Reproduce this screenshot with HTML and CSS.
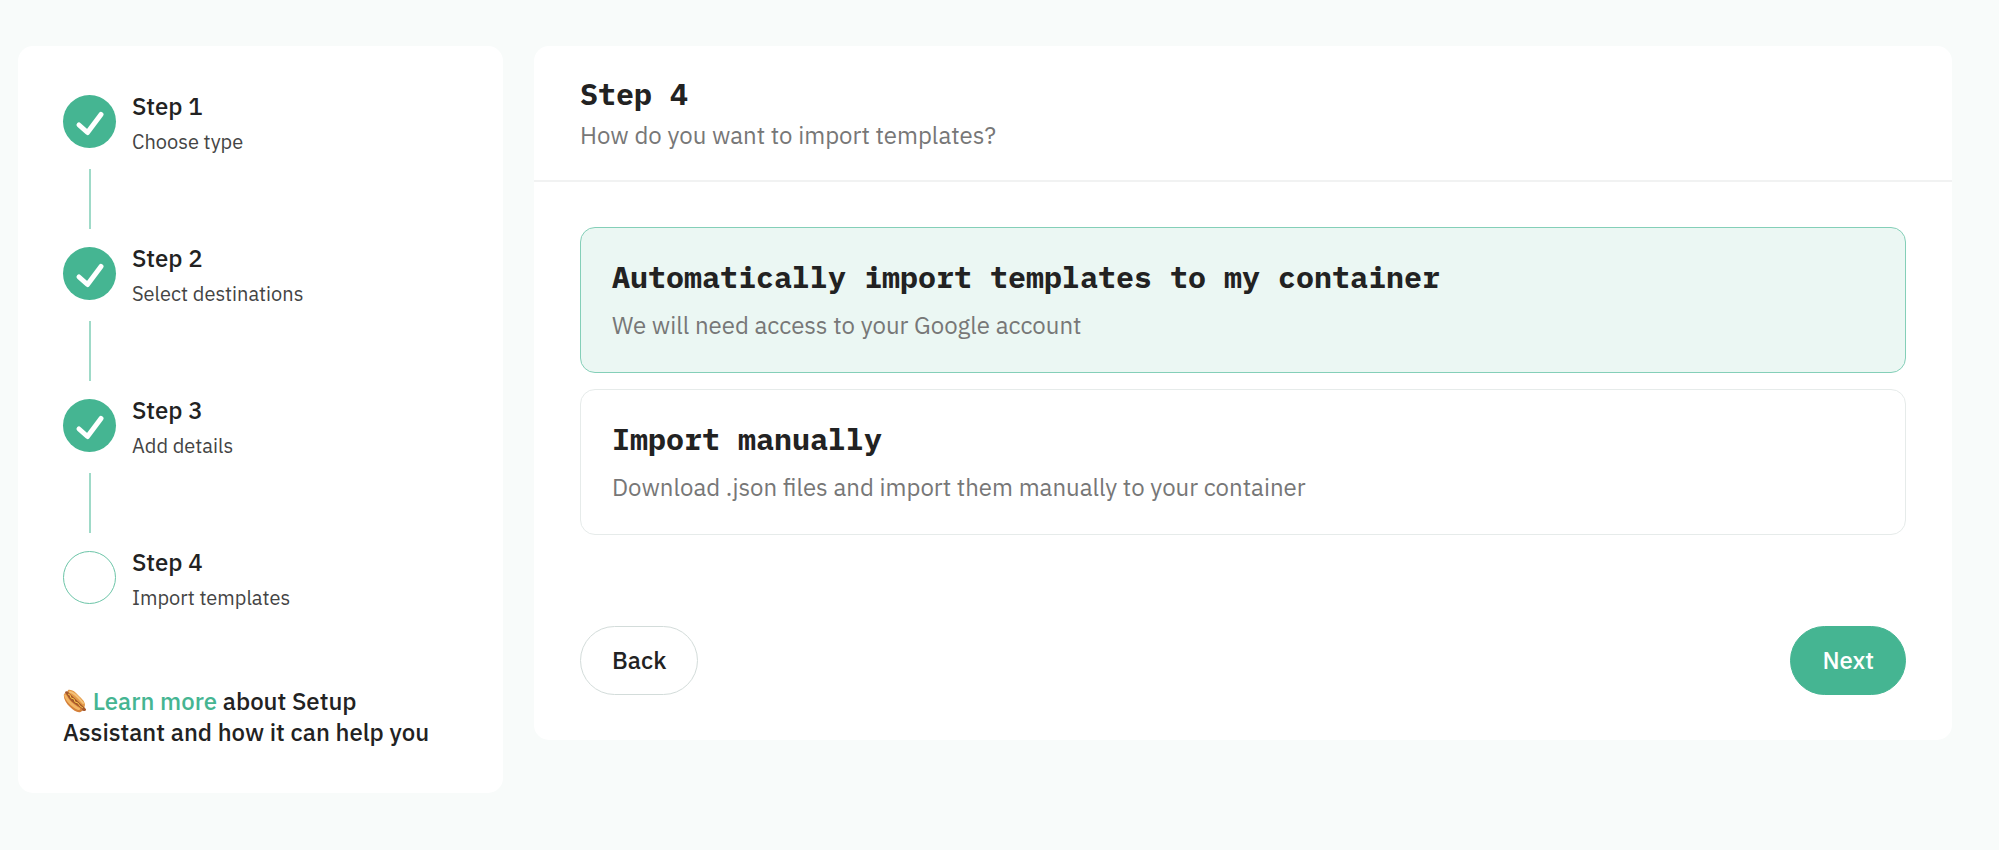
FILE: index.html
```
<!DOCTYPE html>
<html lang="en">
  <head>
    <title>Setup Assistant</title>
    <meta charset="utf-8">
    <meta name="viewport" content="width=device-width, initial-scale=1">
    <link rel="stylesheet" href="styles.css">
  </head>
  <body>
    <div class="page">
      <aside class="card sidebar">
        <ol class="steps">
          <li class="step">
            <span class="marker done">
              <svg class="check" viewBox="0 0 53 53"><path d="M16 30 L24.5 37.5 L38 19.5"/></svg>
            </span>
            <div class="step-text">
              <span class="step-name">Step 1</span>
              <span class="step-info">Choose type</span>
            </div>
          </li>
          <li class="step">
            <span class="marker done">
              <svg class="check" viewBox="0 0 53 53"><path d="M16 30 L24.5 37.5 L38 19.5"/></svg>
            </span>
            <div class="step-text">
              <span class="step-name">Step 2</span>
              <span class="step-info">Select destinations</span>
            </div>
          </li>
          <li class="step">
            <span class="marker done">
              <svg class="check" viewBox="0 0 53 53"><path d="M16 30 L24.5 37.5 L38 19.5"/></svg>
            </span>
            <div class="step-text">
              <span class="step-name">Step 3</span>
              <span class="step-info">Add details</span>
            </div>
          </li>
          <li class="step">
            <span class="marker"></span>
            <div class="step-text">
              <span class="step-name">Step 4</span>
              <span class="step-info">Import templates</span>
            </div>
          </li>
        </ol>
        <p class="help">
          <svg class="hotdog" viewBox="0 0 24 24">
            <path d="M5 1 C9 0 12 3 15 6 C18 9 22 12 22 16 L21 20 L4 4 Z" fill="#e39a48"/>
            <path d="M2 3 C3 2 5 2 6 4 L22 19 C24 21 23 22 21 22 C15 21 3 10 2 3 Z" fill="#a5582b"/>
            <path d="M1 5 C0 9 3 14 7 18 C11 22 16 25 19 22 C20 20 18 19 15 17 C10 14 6 10 4 6 C3 4 2 4 1 5 Z" fill="#d5813a"/>
            <path d="M1 6 C2 11 8 18 15 21 C18 21 18 19 15 18 C10 15 6 11 4 7 C3 5 1 5 1 6 Z" fill="#f2b564"/>
            <path d="M7 3 C11 3 16 9 20 14" fill="none" stroke="#f5c27a" stroke-width="2" stroke-linecap="round"/>
            <path d="M5 5 L7 6 L8 9 L11 10 L12 13 L15 14 L17 17 L20 19" fill="none" stroke="#f6c34b" stroke-width="1"/>
          </svg>
          <a href="#">Learn more</a> about Setup Assistant and how it can help you
        </p>
      </aside>

      <main class="card main">
        <header class="main-header">
          <h1>Step 4</h1>
          <p class="muted">How do you want to import templates?</p>
        </header>
        <form class="main-body">
          <div class="options">
            <label class="option">
              <input type="radio" name="import" value="auto" checked>
              <span class="option-title">Automatically import templates to my container</span>
              <span class="muted">We will need access to your Google account</span>
            </label>
            <label class="option">
              <input type="radio" name="import" value="manual">
              <span class="option-title">Import manually</span>
              <span class="muted">Download .json files and import them manually to your container</span>
            </label>
          </div>
          <div class="buttons">
            <button type="button" class="btn">Back</button>
            <button type="button" class="btn btn-primary">Next</button>
          </div>
        </form>
      </main>
    </div>
  </body>
</html>
```
FILE: styles.css
```
* {
  box-sizing: border-box;
}

body {
  margin: 0;
  background: #f8fbfa;
  color: #222;
  font-family: "IBM Plex Sans", Roboto, sans-serif;
  font-size: 24px;
  line-height: 31px;
}

h1, p, ol {
  margin: 0;
  padding: 0;
}

.page {
  display: flex;
  align-items: flex-start;
  gap: 31px;
  padding: 46px 47px 46px 18px;
}

.card {
  background: #fff;
  border-radius: 15px;
}

/* Sidebar */
.sidebar {
  flex: 0 0 485px;
  padding: 45px;
}

.steps {
  list-style: none;
}
.step {
  display: grid;
  grid-template-columns: 53px 1fr;
  column-gap: 16px;
}
/* Line to the next step */
.step:not(:last-child)::after {
  content: "";
  justify-self: center;
  width: 2px;
  height: 60px;
  margin: 15px 0 14px;
  background: #9fdac8;
}
.marker {
  width: 53px;
  height: 53px;
  margin-top: 4px;
  border: 1px solid #6cc5a8;
  border-radius: 50%;
}
.marker.done {
  border: 0;
  background: #45b592;
}
.check {
  display: block;
  fill: none;
  stroke: #fff;
  stroke-width: 5;
  stroke-linecap: round;
  stroke-linejoin: round;
}
.step-text {
  display: flex;
  flex-direction: column;
  gap: 8px;
}
.step-name {
  font-weight: 500;
}
.step-info {
  color: #444;
  font-size: 20px;
  line-height: 24px;
}

.help {
  margin-top: 76px;
  font-weight: 500;
}
.help a {
  color: #45b592;
  text-decoration: none;
}
.hotdog {
  width: 24px;
  height: 24px;
  vertical-align: -3px;
}

/* Main panel */
.main {
  flex: 1;
  min-width: 0;
}
.main-header {
  padding: 30px 46px 29px;
  border-bottom: 2px solid #f1f2f2;
}
h1, .option-title {
  font-family: "IBM Plex Mono", "Liberation Mono", monospace;
  font-size: 30px;
  font-weight: 700;
  line-height: 36px;
}
.main-header .muted {
  margin-top: 8px;
}
.muted {
  color: #777;
}

.main-body {
  padding: 45px 46px;
}
.options {
  display: grid;
  gap: 16px;
}
.option {
  position: relative;
  display: flex;
  flex-direction: column;
  gap: 15px;
  padding: 31px;
  border: 1px solid #e6ebea;
  border-radius: 15px;
  cursor: pointer;
}
.option:has(:checked) {
  border-color: #84cfb8;
  background: #ebf7f3;
}
.option input {
  position: absolute;
  opacity: 0;
}

.buttons {
  display: flex;
  justify-content: space-between;
  margin-top: 91px;
}
.btn {
  padding: 18px 31px;
  border: 1px solid #d3dcda;
  border-radius: 35px;
  background: #fff;
  color: #222;
  font: inherit;
  font-weight: 500;
  cursor: pointer;
}
.btn-primary {
  border-color: #45b592;
  background: #45b592;
  color: #fff;
}
```
